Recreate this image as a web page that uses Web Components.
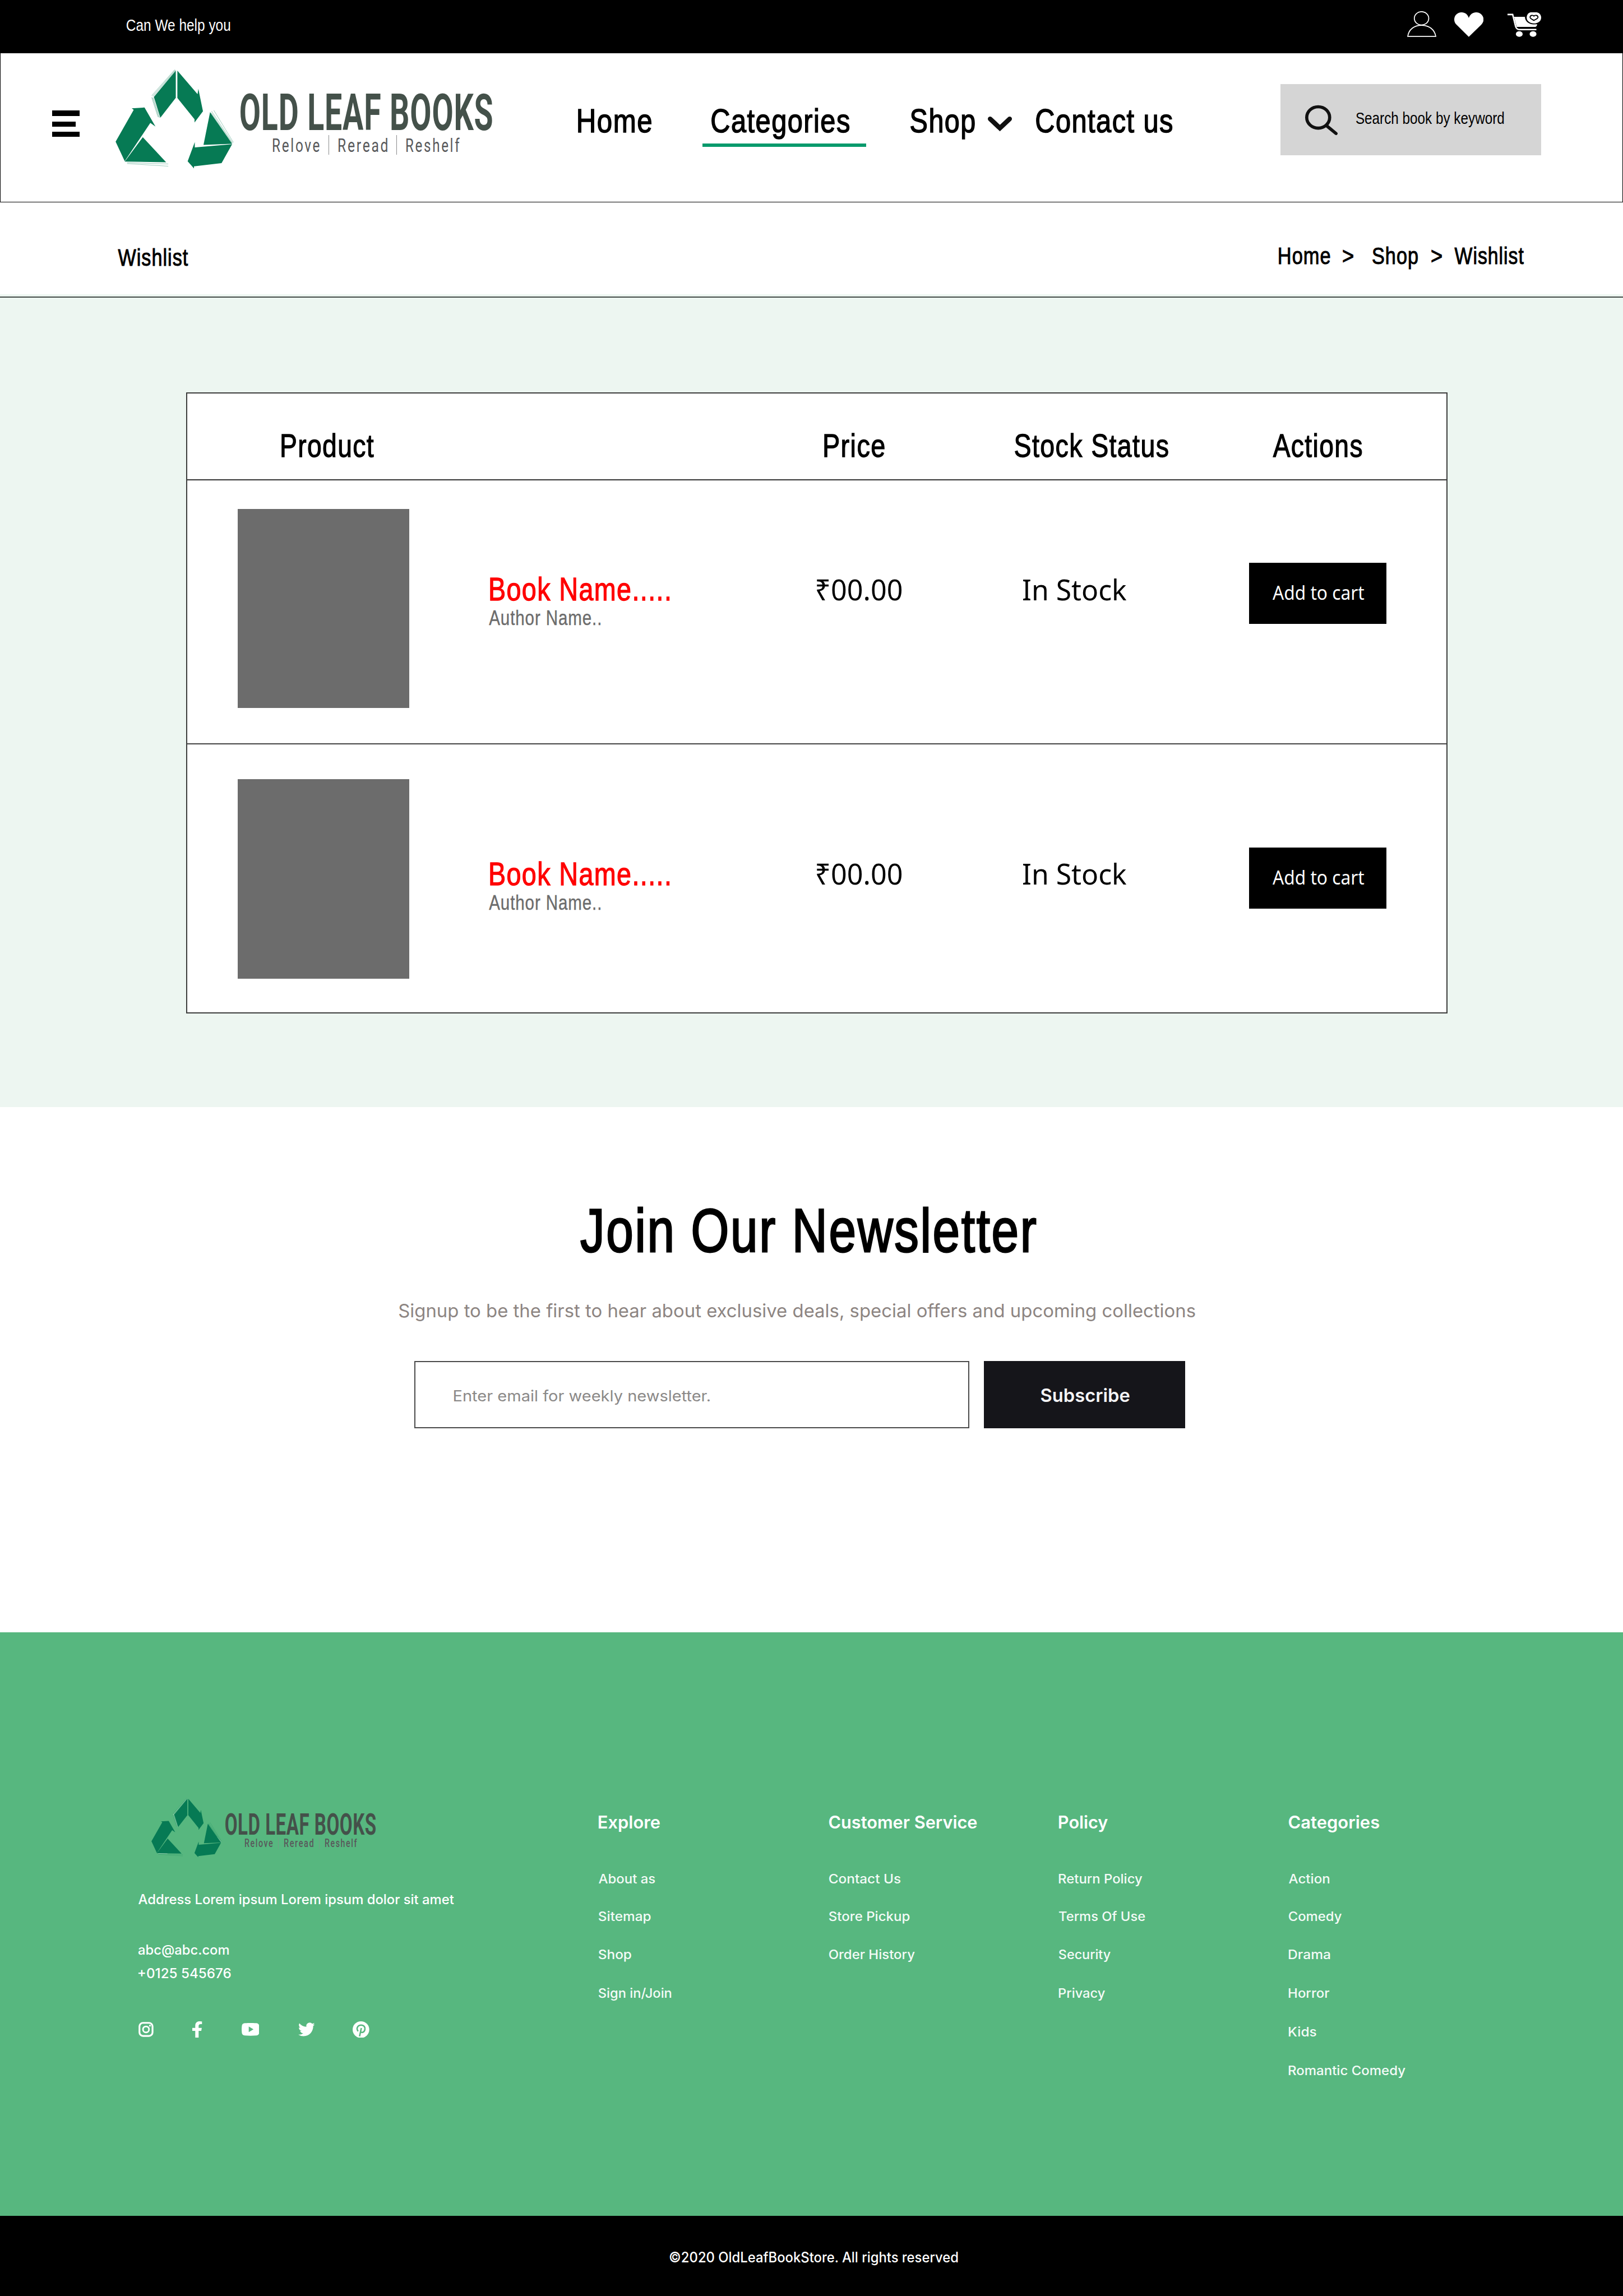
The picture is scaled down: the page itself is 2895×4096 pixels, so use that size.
<!DOCTYPE html>
<html lang="en">
<head>
<meta charset="utf-8">
<title>Old Leaf Books - Wishlist</title>
<style>
/* 1rem = 100 design units on a 4100-unit-wide page */
html { font-size: calc(100vw / 41); }
body { margin: 0; background: #fff; color: #000; font-family: "Liberation Sans", Arial, sans-serif; overflow: hidden; }
</style>
</head>
<body>
<wishlist-page></wishlist-page>
<script>
const ctx = document.createElement('canvas').getContext('2d');
const define = (name, html, after) => customElements.define(name, class extends HTMLElement {
  connectedCallback() {
    if (this.shadowRoot) return;
    const t = document.createElement('template');
    t.innerHTML = typeof html === 'function' ? html(this) : html;
    this.attachShadow({ mode: 'open' }).append(t.content.cloneNode(true));
    if (after) after(this);
  }
});

/* One line of text whose box is exactly its ink: w units wide, h units of cap height.
   Optional ls: letter spacing in em; stroked text is tracked a little by default. */
define('ink-text', `<style>
  :host { display: block; flex: none; }
  span { display: block; width: max-content; white-space: pre; line-height: 1; transform-origin: 0 0; }
  i { display: inline-block; width: 0; height: 0; }
</style><span><slot></slot><i></i></span>`, el => {
  const unit = parseFloat(getComputedStyle(document.documentElement).fontSize) / 100;
  const cs = getComputedStyle(el);
  const stroke = (parseFloat(cs.webkitTextStrokeWidth) || 0) / unit;
  const W = +el.getAttribute('w'), H = +el.getAttribute('h');
  const w = W - stroke, h = H - stroke, ls = +(el.getAttribute('ls') || (stroke ? .03 : 0));
  ctx.font = `${cs.fontWeight} 200px ${cs.fontFamily}`;
  ctx.letterSpacing = '0px';
  const cap = ctx.measureText('H').actualBoundingBoxAscent / 200;
  const m = ctx.measureText(el.textContent);
  const left = -m.actualBoundingBoxLeft / 200;
  const ink = m.actualBoundingBoxRight / 200 - left + ls * (el.textContent.length - 1);
  const fs = h / cap, sx = w / (ink * fs);
  el.style.width = W / 100 + 'rem';
  el.style.height = H / 100 + 'rem';
  const s = el.shadowRoot.querySelector('span'), probe = s.querySelector('i');
  s.style.fontSize = fs / 100 + 'rem';
  if (ls) s.style.letterSpacing = ls + 'em';
  const base = (probe.getBoundingClientRect().bottom - s.getBoundingClientRect().top) / unit;
  probe.remove();
  s.style.transform = `translate(${(stroke / 2 - left * fs * sx) / 100}rem, ${(stroke / 2 + h - base) / 100}rem) scaleX(${sx})`;
});

/* k scales the whole lockup */
define('brand-logo', el => {
  const k = +(el.getAttribute('k') || 1), r = n => (n * k / 100).toFixed(4) + 'rem';
  const tag = (t, w) => `<ink-text w="${w * k}" h="${34 * k}" ls=".11">${t}</ink-text>`;
  return `<style>
  :host { display: flex; align-items: flex-start; flex: none; width: ${r(952)}; height: ${r(250)}; }
  svg { display: block; flex: none; width: ${r(298)}; height: ${r(250)}; overflow: visible; }
  .mark { fill: #067a54; }
  .pages { fill: none; stroke: #067a54; stroke-width: 1.6; }
  .glint { fill: none; stroke: var(--glint, transparent); stroke-width: 5; }
  .words { margin: ${r(61.5)} 0 0 ${r(17)}; font-family: Roboto, sans-serif; }
  .name { font-weight: 700; color: #44514a; }
  .tags { display: flex; margin: ${r(13)} 0 0 ${r(82)}; color: #58595b; }
  .tags ink-text { margin-top: ${r(8)}; }
  .tags b { width: 1px; height: ${r(49)}; background: #8b8c8e; margin: 0 ${r(23.5)}; opacity: var(--bar, 1); }
</style>
<svg viewBox="292 175 298 250">
  <g transform="translate(260 150) scale(.33333)">
    <path class="glint" d="M549 79 375 280 428 440M184 777 300 779M930 568 985 632"/>
    <g class="mark">
      <path d="M553 83V290L436 440 387 283Z"/>
      <path d="M565 83 718 262 724 222 759 392 695 477V452L565 291Z"/>
      <path d="M219 369 316 363 399 507 360 480 166 770 97 622 234 381Z"/>
      <path d="M303 588 480 778 166 773Z"/>
      <path d="M813 398 980 638 763 647Z"/>
      <path d="M697 625V666L980 641 900 785 691 809V825L643 771Z"/>
    </g>
    <path class="pages" d="M545 76 370 273M549 78 376 277M552 81 382 280M370 286 418 435M376 287 424 438M382 288 430 440M824 390 983 630M841 384 990 628M822 402 980 634M184 781 496 791M184 788 496 808"/>
  </g>
</svg>
<div class="words">
  <ink-text class="name" w="${636 * k}" h="${92 * k}" ls=".015">OLD LEAF BOOKS</ink-text>
  <div class="tags">${tag('Relove', 117)}<b></b>${tag('Reread', 123)}<b></b>${tag('Reshelf', 134)}</div>
</div>`;
});

define('top-bar', `<style>
  :host { display: flex; align-items: flex-start; height: 1.35rem; background: #000; color: #fff; box-sizing: border-box; padding-left: 3.2rem; }
  ink-text { margin-top: .483rem; }
  svg { display: block; flex: none; }
  .user { width: .74rem; height: .65rem; margin: .28rem 0 0 auto; }
  .heart { width: .74rem; height: .62rem; margin: .31rem 0 0 .45rem; }
  .cart { width: .85rem; height: .62rem; margin: .31rem 2.07rem 0 .61rem; }
</style>
<ink-text w="261" h="29.7">Can We help you</ink-text>
<svg class="user" viewBox="0 0 74 65" fill="none" stroke="#fff" stroke-width="2.5"><ellipse cx="36.3" cy="18" rx="18.2" ry="16.8"/><path d="M1.5 63.5C4 46 18 35.5 36.5 35.5S69 46 72.3 63.5Z"/></svg>
<svg class="heart" viewBox="0 0 74 62" fill="#fff"><path d="M36.7 14C34 5 27 0 18.5 0 8 0 0 8 0 18c0 5.500 2 10 6 13.500L36.700 62 68 31.500C72 27 74 23.500 74 18 74 8 66 0 55.500 0 47 0 40 5 36.700 14Z"/></svg>
<svg class="cart" viewBox="0 0 85 62"><path d="M0 5.500H13L20.500 36Q23 43.500 30 43.500H73" fill="none" stroke="#fff" stroke-width="3.600"/><path d="M16.500 11.500H44C44 23 54 30.500 66 30.500L75 30C74.500 35 72 37 68 37H23Z" fill="#fff"/><path d="M48.500 13.500C48.500 5 54 0 59 0H74C80 1 85 6 85 13.500 85 22 77 28 66.700 28S48.500 22 48.500 13.500Z" fill="#fff"/><path d="M66.700 9.500C64.500 6.500 57 7 57 12.500 57 16 63 18 66.700 20.500 70.500 18 77 16 77 12.500 77 7 69 6.500 66.700 9.500Z" fill="none" stroke="#000" stroke-width="2.600"/><ellipse cx="29.700" cy="54.800" rx="8.600" ry="7.100" fill="#fff"/><ellipse cx="64.500" cy="54.800" rx="8.600" ry="7.100" fill="#fff"/></svg>`);

define('search-box', `<style>
  :host { display: flex; align-items: flex-start; flex: none; background: #d5d5d5; }
  svg { display: block; flex: none; width: .82rem; height: .75rem; margin: .53rem .47rem 0 .63rem; overflow: visible; }
  ::slotted(*) { margin-top: .71rem; }
</style>
<svg viewBox="0 0 82 75" fill="none" stroke="#111"><ellipse cx="33" cy="30.500" rx="29" ry="27" stroke-width="8"/><path d="M55 52 78 71" stroke-width="8" stroke-linecap="round"/></svg>
<slot></slot>`);

define('site-header', `<style>
  :host { display: flex; align-items: flex-start; box-sizing: border-box; height: 3.76rem; border: solid #000; border-width: 0 1px 1px; padding-left: 1.31rem; }
  .menu { display: flex; flex-direction: column; gap: .14rem; margin-top: 1.44rem; width: .69rem; flex: none; }
  .menu i { height: .12rem; background: #000; }
  .menu i:first-child { height: .14rem; }
  .menu i:nth-child(2) { width: .59rem; height: .125rem; }
  brand-logo { margin: .4rem 0 0 .91rem; }
  nav { display: flex; margin: 1.395rem 0 0 2.155rem; -webkit-text-stroke: .022rem #000; }
  .cat { margin-left: 1.28rem; padding-left: .23rem; width: 3.91rem; height: .885rem; border-bottom: .09rem solid #089a6c; margin-right: 1.12rem; flex: none; }
  nav svg { display: block; width: .61rem; height: .37rem; margin: .2rem .6rem 0 .33rem; overflow: visible; }
  search-box { width: 6.58rem; height: 1.79rem; margin: .78rem 2.06rem 0 auto; }
</style>
<div class="menu"><i></i><i></i><i></i></div>
<brand-logo></brand-logo>
<nav>
  <ink-text w="186" h="60">Home</ink-text>
  <div class="cat"><ink-text w="349" h="60">Categories</ink-text></div>
  <ink-text w="163" h="60">Shop</ink-text>
  <svg viewBox="0 0 61 37" fill="none" stroke="#111" stroke-width="12" stroke-linecap="round"><path d="M6 6 30.500 29 55 6"/></svg>
  <ink-text w="345" h="60">Contact us</ink-text>
</nav>
<search-box><ink-text w="373" h="28.5">Search book by keyword</ink-text></search-box>`);

define('bread-crumbs', `<style>
  :host { display: flex; align-items: flex-start; box-sizing: border-box; height: 2.32rem; padding: 1.13rem 2.5rem 0 2.97rem; -webkit-text-stroke: .015rem #000; }
  .path { display: flex; margin-left: auto; }
</style>
<ink-text w="178" h="43" style="margin-top:.05rem">Wishlist</ink-text>
<div class="path">
  <ink-text w="130" h="43">Home</ink-text>
  <ink-text w="27" h="43" style="margin-left:.325rem">&gt;</ink-text>
  <ink-text w="115" h="43" style="margin-left:.475rem">Shop</ink-text>
  <ink-text w="27" h="43" style="margin-left:.33rem">&gt;</ink-text>
  <ink-text w="176" h="43" style="margin-left:.32rem">Wishlist</ink-text>
</div>`);

define('wishlist-row', `<style>
  :host { display: grid; grid-template-columns: 15.28rem 5.2rem 5.8rem 5.55rem; align-items: start; }
  .product { display: flex; align-items: flex-start; padding-left: 1.28rem; }
  .cover { width: 4.33rem; height: 5.04rem; background: #6c6c6c; flex: none; }
  .names { margin: var(--name-top) 0 0 2.04rem; }
  .title { color: #f00; -webkit-text-stroke: .018rem #f00; }
  .author { color: #6c6c6c; margin: .25rem 0 0 -.025rem; -webkit-text-stroke: .006rem #6c6c6c; }
  .cell { padding-top: calc(var(--name-top) + .04rem); font-family: "Noto Sans", sans-serif; }
  .price { padding-left: .63rem; } .stock { padding-left: .645rem; }
  .cell, .product { margin-top: var(--cover-top); }
  .btn { width: 3.465rem; height: 1.54rem; margin: calc(var(--cover-top) + var(--name-top) - .375rem) 0 0 .55rem; padding: .59rem 0 0 .59rem; box-sizing: border-box; background: #000; color: #fff; font-family: "Noto Sans", sans-serif; }
</style>
<div class="product"><div class="cover"></div><div class="names">
  <ink-text class="title" w="454" h="57.5">Book Name.....</ink-text>
  <ink-text class="author" w="282" h="37">Author Name..</ink-text></div></div>
<div class="cell price"><ink-text w="214" h="52">₹00.00</ink-text></div>
<div class="cell stock"><ink-text w="261" h="52">In Stock</ink-text></div>
<div class="btn"><ink-text w="231" h="34.5">Add to cart</ink-text></div>`);

define('wishlist-table', `<style>
  :host { display: block; box-sizing: border-box; width: 31.87rem; height: 15.68rem; border: .03rem solid #3c3c3c; background: #fff; }
  .head { display: grid; grid-template-columns: 15.28rem 5.2rem 5.8rem 5.55rem; align-items: start; height: 2.19rem; padding-top: 1.02rem; box-sizing: border-box; border-bottom: .03rem solid #333; -webkit-text-stroke: .018rem #000; }
  wishlist-row { height: 6.64rem; box-sizing: border-box; --cover-top: .715rem; --name-top: 1.745rem; }
  .second { border-top: .03rem solid #444; height: auto; --cover-top: .88rem; --name-top: 2.105rem; }
</style>
<div class="head">
  <ink-text w="234" h="58.5" style="margin-left:2.38rem">Product</ink-text>
  <ink-text w="153" h="58.5" style="margin-left:.81rem">Price</ink-text>
  <ink-text w="388" h="58.5" style="margin-left:.42rem">Stock Status</ink-text>
  <ink-text w="226" h="58.5" style="margin-left:1.14rem">Actions</ink-text>
</div>
<wishlist-row></wishlist-row>
<wishlist-row class="second"></wishlist-row>`);

define('news-letter', `<style>
  :host { display: flex; flex-direction: column; align-items: flex-start; box-sizing: border-box; height: 13.27rem; padding-top: 2.56rem; font-family: Inter, sans-serif; }
  .title { margin-left: 14.655rem; font-family: "Liberation Sans", sans-serif; -webkit-text-stroke: .04rem #000; }
  .lead { margin: 1.305rem 0 0 10.09rem; color: #8d8582; }
  .form { display: flex; margin: 1.105rem 0 0 10.47rem; }
  .field { box-sizing: border-box; width: 14.015rem; height: 1.7rem; border: .03rem solid #4a4a4a; padding: .705rem 0 0 .97rem; color: #8b8988; }
  .btn { box-sizing: border-box; width: 5.09rem; height: 1.7rem; margin-left: .37rem; padding: .69rem 0 0 1.44rem; background: #15151a; color: #f4f4f6; font-weight: 600; }
</style>
<ink-text class="title" w="1153" h="111">Join Our Newsletter</ink-text>
<ink-text class="lead" w="2011" h="34">Signup to be the first to hear about exclusive deals, special offers and upcoming collections</ink-text>
<div class="form">
  <div class="field"><ink-text w="646" h="28.5">Enter email for weekly newsletter.</ink-text></div>
  <div class="btn"><ink-text w="223" h="34">Subscribe</ink-text></div>
</div>`);

define('link-column', el => {
  const item = s => { const [t, w] = s.split(':'); return `<ink-text w="${w}" h="24">${t}</ink-text>`; };
  const [t, w] = el.getAttribute('heading').split(':');
  return `<style>
    :host { display: flex; flex-direction: column; width: 5.81rem; flex: none; font-weight: 500; color: #f4fbf7; }
    .h { font-weight: 600; margin-bottom: 1.155rem; color: #fff; }
    .list { display: flex; flex-direction: column; gap: .734rem; }
    .list ink-text:first-child { margin-bottom: -.03rem; }
  </style><ink-text class="h" w="${w}" h="32">${t}</ink-text>
  <div class="list">${el.getAttribute('items').split('|').map(item).join('')}</div>`;
});

define('social-links', `<style>
  :host { display: flex; align-items: center; height: .44rem; }
  svg { display: block; flex: none; fill: #fff; }
</style>
<svg style="width:.38rem;height:.38rem" viewBox="0 0 38 38"><rect x="2.500" y="2.500" width="33" height="33" rx="9" fill="none" stroke="#fff" stroke-width="4.500"/><circle cx="19" cy="19" r="7.600" fill="none" stroke="#fff" stroke-width="4"/><circle cx="29" cy="9.500" r="2.300"/></svg>
<svg style="width:.25rem;height:.42rem;margin-left:.98rem" viewBox="0 0 25 42"><path d="M7.500 42V24H0V16.500H7.500V11C7.500 3.500 12 0 18.500 0 21.500 0 24.500.500 24.500.500V7H21C17.500 7 16 9 16 11.500V16.500H24L22.700 24H16V42Z"/></svg>
<svg style="width:.45rem;height:.32rem;margin-left:.99rem" viewBox="0 0 45 32"><path fill-rule="evenodd" d="M8 .500Q22.500-.800 37 .500 44 1 44.500 8 45.300 16 44.500 24 44 31 37 31.500 22.500 32.700 8 31.500 1 31 .500 24-.300 16 .500 8 1 1 8 .500ZM18 9V23L30 16Z"/></svg>
<svg style="width:.42rem;height:.35rem;margin-left:.98rem" viewBox="0 0 24 20"><path d="M23.950 2.570a10 10 0 0 1-2.820.770 4.960 4.960 0 0 0 2.160-2.720 9.900 9.900 0 0 1-3.120 1.190 4.920 4.920 0 0 0-8.380 4.480C7.690 6.090 4.070 4.130 1.640 1.160a4.820 4.820 0 0 0-.670 2.480c0 1.710.870 3.210 2.190 4.090a4.900 4.900 0 0 1-2.230-.610v.060a4.920 4.920 0 0 0 3.950 4.830 5 5 0 0 1-2.210.080 4.940 4.940 0 0 0 4.600 3.420A9.870 9.870 0 0 1 0 17.540a13.990 13.990 0 0 0 7.560 2.210c9.050 0 14-7.500 14-13.980 0-.210 0-.420-.020-.630a9.940 9.940 0 0 0 2.410-2.570Z"/></svg>
<svg style="width:.42rem;height:.42rem;margin-left:.96rem" viewBox="0 0 42 42"><circle cx="21" cy="21" r="21"/><path d="M17.500 38 22 17M13.800 25C8 17 13.500 9.500 21.500 9.500 29 9.500 32 15 31 20.500 29.500 28.500 22 30 19.500 25.500" fill="none" stroke="#57b77f" stroke-width="3.600"/></svg>`);

define('site-footer', `<style>
  :host { display: block; font-family: Inter, sans-serif; font-weight: 500; color: #fff; }
  .main { display: flex; align-items: flex-start; box-sizing: border-box; height: 14.75rem; background: #57b77f; padding-left: 3.5rem; }
  .about { width: 11.63rem; padding-top: 4.19rem; flex: none; }
  brand-logo { margin-left: .32rem; --glint: #cfe9da; --bar: .5; }
  social-links { margin: 1.08rem 0 0; }
  .cols { display: flex; padding-top: 4.63rem; }
  .copy { display: flex; box-sizing: border-box; height: 2.02rem; background: #000; padding: .92rem 0 0 16.92rem; }
</style>
<div class="main">
  <div class="about">
    <brand-logo k=".597"></brand-logo>
    <ink-text w="797" h="24.5" style="margin-top:.95rem">Address Lorem ipsum Lorem ipsum dolor sit amet</ink-text>
    <ink-text w="228" h="24.5" style="margin-top:1.03rem">abc@abc.com</ink-text>
    <ink-text w="233" h="24.5" style="margin-top:.34rem">+0125 545676</ink-text>
    <social-links></social-links>
  </div>
  <div class="cols">
    <link-column heading="Explore:154" items="About as:142|Sitemap:131|Shop:82|Sign in/Join:183"></link-column>
    <link-column heading="Customer Service:373" items="Contact Us:180|Store Pickup:203|Order History:216"></link-column>
    <link-column heading="Policy:123" items="Return Policy:210|Terms Of Use:217|Security:130|Privacy:116"></link-column>
    <link-column heading="Categories:228" items="Action:102|Comedy:133|Drama:104|Horror:102|Kids:69|Romantic Comedy:294"></link-column>
  </div>
</div>
<div class="copy"><ink-text w="728" h="26">©2020 OldLeafBookStore. All rights reserved</ink-text></div>`);

define('wishlist-page', `<style>
  :host { display: flex; flex-direction: column; min-height: 100vh; background: #fff; }
  :host > * { flex: none; }
  .panel { box-sizing: border-box; height: 20.54rem; background: #edf6f1; padding: .06rem 0 0; }
  .rule { height: .03rem; background: #444b48; }
  wishlist-table { margin: 2.4rem 0 0 4.7rem; }
  .rest { flex: 1 0 0; background: #000; }
</style>
<top-bar></top-bar>
<site-header></site-header>
<bread-crumbs></bread-crumbs>
<div class="panel"><div class="rule"></div><wishlist-table></wishlist-table></div>
<news-letter></news-letter>
<site-footer></site-footer>
<div class="rest"></div>`);
</script>
</body>
</html>
